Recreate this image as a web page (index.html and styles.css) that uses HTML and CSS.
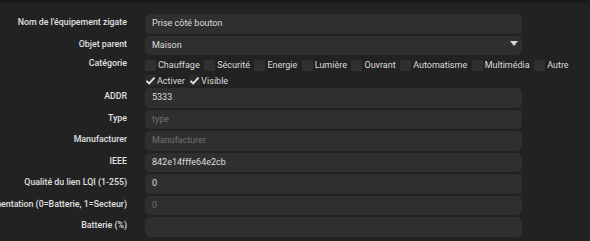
FILE: index.html
```html
<!DOCTYPE html>
<html>
<head>
<meta charset="utf-8">
<link rel="stylesheet" href="styles.css">
</head>
<body>
<div class="topbar"></div>
<form class="form">
  <div class="row">
    <label class="lbl"><span>Nom de l'équipement zigate</span></label>
    <div class="ctl"><div class="input">Prise côté bouton</div></div>
  </div>
  <div class="row">
    <label class="lbl"><span>Objet parent</span></label>
    <div class="ctl"><div class="input select">Maison
      <svg class="caret" width="8" height="5" viewBox="0 0 8 5"><path d="M0 0H8L4 5Z" fill="#d8d8d8"/></svg></div></div>
  </div>
  <div class="row row-check">
    <label class="lbl"><span>Catégorie</span></label>
    <div class="ctl checks">
      <span class="chk"><span class="box"></span>Chauffage</span>
      <span class="chk"><span class="box"></span>Sécurité</span>
      <span class="chk"><span class="box"></span>Energie</span>
      <span class="chk"><span class="box"></span>Lumière</span>
      <span class="chk"><span class="box"></span>Ouvrant</span>
      <span class="chk"><span class="box"></span>Automatisme</span>
      <span class="chk"><span class="box"></span>Multimédia</span>
      <span class="chk"><span class="box"></span>Autre</span>
    </div>
  </div>
  <div class="row row-check">
    <label class="lbl"></label>
    <div class="ctl checks">
      <span class="chk"><svg class="tick" width="11" height="11" viewBox="0 0 11 11"><path d="M1.5 5.8L4.2 8.4L9.5 2.6" stroke="#e6e6e6" stroke-width="1.8" fill="none"/></svg>Activer</span>
      <span class="chk"><svg class="tick" width="11" height="11" viewBox="0 0 11 11"><path d="M1.5 5.8L4.2 8.4L9.5 2.6" stroke="#e6e6e6" stroke-width="1.8" fill="none"/></svg>Visible</span>
    </div>
  </div>
  <div class="row">
    <label class="lbl"><span>ADDR</span></label>
    <div class="ctl"><div class="input">5333</div></div>
  </div>
  <div class="row">
    <label class="lbl"><span>Type</span></label>
    <div class="ctl"><div class="input ph">type</div></div>
  </div>
  <div class="row">
    <label class="lbl"><span>Manufacturer</span></label>
    <div class="ctl"><div class="input ph">Manufacturer</div></div>
  </div>
  <div class="row">
    <label class="lbl"><span>IEEE</span></label>
    <div class="ctl"><div class="input">842e14fffe64e2cb</div></div>
  </div>
  <div class="row">
    <label class="lbl"><span>Qualité du lien LQI (1-255)</span></label>
    <div class="ctl"><div class="input">0</div></div>
  </div>
  <div class="row">
    <label class="lbl"><span>Alimentation (0=Batterie, 1=Secteur)</span></label>
    <div class="ctl"><div class="input ph">0</div></div>
  </div>
  <div class="row">
    <label class="lbl"><span>Batterie (%)</span></label>
    <div class="ctl"><div class="input"></div></div>
  </div>
</form>
</body>
</html>
```
FILE: styles.css
```css
html, body {
  margin: 0;
  padding: 0;
  background: #222222;
  font-family: Roboto, "Liberation Sans", sans-serif;
  font-size: 9px;
  color: #dcdcdc;
  overflow: hidden;
}
.topbar {
  height: 3px;
  background: #1a1a1a;
}
.form {
  padding-top: 11px;
  display: flex;
  flex-direction: column;
}
.row {
  display: flex;
  align-items: flex-start;
  margin-bottom: 2px;
}
.lbl {
  width: 127px;
  flex: none;
  display: flex;
  justify-content: flex-end;
  font-weight: 500;
  font-size: 8.8px;
  color: #e0e0e0;
  padding-top: 2px;
  line-height: 13px;
  white-space: nowrap;
  overflow: hidden;
}
.lbl span {
  flex: none;
}
.ctl {
  margin-left: 18px;
  width: 377px;
}
.input {
  position: relative;
  height: 19.5px;
  line-height: 19.5px;
  background: #2f2f2f;
  border-radius: 5px;
  padding-left: 7px;
  color: #dedede;
  box-sizing: border-box;
}
.input.ph {
  color: #6f6f6f;
}
.caret {
  position: absolute;
  right: 4px;
  top: 5.5px;
}
.row-check {
  margin-bottom: 0;
  height: 15.5px;
}
.row-check .lbl {
  padding-top: 0;
}
.checks {
  display: flex;
  align-items: center;
  height: 14px;
  padding-top: 1px;
  white-space: nowrap;
}
.chk {
  display: inline-flex;
  align-items: center;
  margin-right: 4.5px;
  color: #dcdcdc;
}
.box {
  width: 11px;
  height: 11px;
  background: #303030;
  border-radius: 1px;
  margin-right: 2px;
}
.tick {
  margin-right: 1px;
  background: #2a2a2a;
}
```
